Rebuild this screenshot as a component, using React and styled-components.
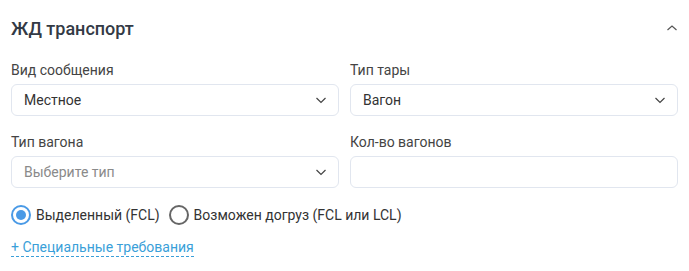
import React from 'react';
import styled, { createGlobalStyle } from 'styled-components';

const GlobalStyle = createGlobalStyle`
  body {
    margin: 0;
    background: #fff;
    font-family: Roboto, "Noto Sans", sans-serif;
  }
`;

const Panel = styled.div`
  padding: 14px 11px 0 11px;
  width: 667px;
`;

const Header = styled.div`
  display: flex;
  align-items: center;
  justify-content: space-between;
  height: 28px;
`;

const Title = styled.h2`
  margin: 0;
  font-size: 18px;
  font-weight: 500;
  color: #333a45;
`;

const Toggle = styled.button`
  border: 0;
  background: none;
  padding: 0;
  display: flex;
  color: #555;
`;

const Grid = styled.div`
  display: grid;
  grid-template-columns: 1fr 1fr;
  column-gap: 11px;
  row-gap: 16px;
  margin-top: 18px;
`;

const Field = styled.div`
  display: flex;
  flex-direction: column;
`;

const Label = styled.label`
  font-size: 14px;
  color: #444;
  line-height: 20px;
  margin-bottom: 4px;
`;

const Box = styled.div`
  height: 32px;
  box-sizing: border-box;
  border: 1px solid #e1e6ef;
  border-radius: 6px;
  display: flex;
  align-items: center;
  justify-content: space-between;
  padding: 0 11px 0 12px;
  font-size: 14px;
  color: ${p => (p.placeholder ? '#8a8a8a' : '#333')};
`;

const Radios = styled.div`
  display: flex;
  align-items: center;
  gap: 9px;
  margin-top: 17px;
  height: 20px;
`;

const RadioItem = styled.label`
  display: flex;
  align-items: center;
  gap: 5px;
  font-size: 14px;
  color: #333;
`;

const Circle = styled.span`
  width: 20px;
  height: 20px;
  box-sizing: border-box;
  border-radius: 50%;
  border: 2px solid ${p => (p.checked ? '#4a9ae6' : '#666')};
  display: flex;
  align-items: center;
  justify-content: center;
  &::after {
    content: '';
    width: 10px;
    height: 10px;
    border-radius: 50%;
    background: ${p => (p.checked ? '#4a9ae6' : 'transparent')};
  }
`;

const Extra = styled.a`
  display: inline-block;
  margin-top: 13px;
  font-size: 14px;
  color: #3a9fd9;
  text-decoration: none;
  border-bottom: 1px dashed #3a9fd9;
  line-height: 18px;
`;

const Chevron = ({ up }) => (
  <svg width="12" height="8" viewBox="0 0 12 8" fill="none">
    <path
      d={up ? 'M1.5 6L6 2L10.5 6' : 'M1.5 2L6 6.5L10.5 2'}
      stroke={up ? '#555' : '#444'}
      strokeWidth="1.2"
    />
  </svg>
);

const Select = ({ value, placeholder }) => (
  <Box placeholder={placeholder ? 1 : undefined}>
    <span>{value || placeholder}</span>
    <Chevron />
  </Box>
);

export default function App() {
  return (
    <Panel>
      <GlobalStyle />
      <Header>
        <Title>ЖД транспорт</Title>
        <Toggle><Chevron up /></Toggle>
      </Header>
      <Grid>
        <Field>
          <Label>Вид сообщения</Label>
          <Select value="Местное" />
        </Field>
        <Field>
          <Label>Тип тары</Label>
          <Select value="Вагон" />
        </Field>
        <Field>
          <Label>Тип вагона</Label>
          <Select placeholder="Выберите тип" />
        </Field>
        <Field>
          <Label>Кол-во вагонов</Label>
          <Box />
        </Field>
      </Grid>
      <Radios>
        <RadioItem><Circle checked />Выделенный (FCL)</RadioItem>
        <RadioItem><Circle />Возможен догруз (FCL или LCL)</RadioItem>
      </Radios>
      <Extra href="#">+ Специальные требования</Extra>
    </Panel>
  );
}
